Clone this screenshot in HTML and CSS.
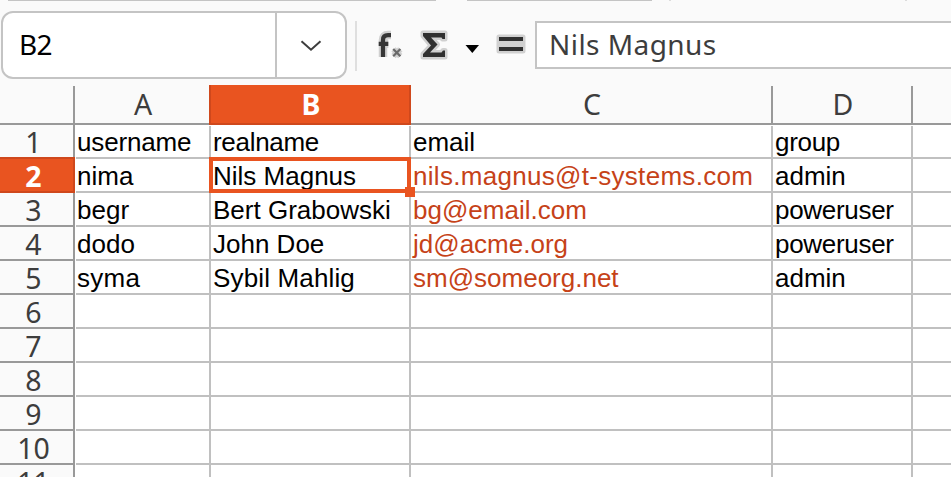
FILE: index.html
```html
<!DOCTYPE html>
<html lang="en">
<head>
<meta charset="utf-8">
<title>Spreadsheet</title>
<link rel="stylesheet" href="styles.css">
</head>
<body>
<div class="strip"><i class="edge edge-a"></i><i class="edge edge-b"></i><i class="tick tick-a"></i><i class="tick tick-b"></i></div>
<div class="bar">
  <div class="namebox"><span class="ref">B2</span><span class="drop"><svg width="22" height="12" viewBox="0 0 22 12"><path d="M1.5 1.2 L11 9.7 L20.5 1.2" fill="none" stroke="#3d3d3d" stroke-width="2"/></svg></span></div>
  <i class="sep"></i>
  <svg class="tools" width="158" height="40" viewBox="370 25 158 40">
    <g stroke-linejoin="round">
      <g fill="none" stroke="#d0d0d0" stroke-width="5">
        <path d="M391 35 H388 Q383 35 383 40 V57 M378.7 43.8 H388.3" stroke-width="8.5"/>
        <path d="M393.5 49.3 l6.8 6.8 m0 -6.8 l-6.8 6.8" stroke-width="6"/>
        <path fill="#d0d0d0" d="M423 33 H445 V39 H442.5 L441.5 37.5 H431 L437.5 44.5 L430 52.5 H441.5 L443 50.5 H445 V57 H423 V54 L431 45.5 L423 36 Z"/>
        <path fill="#d0d0d0" d="M499 37 H523 V51 H499 Z"/>
      </g>
      <path d="M391 35.2 H388 Q383 35.2 383 40 V57 M378.7 43.8 H388.3" fill="none" stroke="#363636" stroke-width="4.2"/>
      <path d="M393.2 49 l7.2 7.2 m0 -7.2 l-7.2 7.2" fill="none" stroke="#6a6a6a" stroke-width="2.2"/>
      <path d="M423 33 H445 V39 H442.5 L441.5 37.5 H431 L437.5 44.5 L430 52.5 H441.5 L443 50.5 H445 V57 H423 V54 L431 45.5 L423 36 Z" fill="#303030"/>
      <path d="M499 37 H523 V41 H499 Z M499 47 H523 V51 H499 Z" fill="#303030"/>
    </g>
    <path d="M465.5 45 H479 L472.3 53 Z" fill="#000"/>
  </svg>
  <div class="formula">Nils Magnus</div>
</div>
<div class="sheet">
  <div class="heads"><b></b><b>A</b><b class="on">B</b><b>C</b><b>D</b><b></b></div>
  <div class="row"><b>1</b><span class="snug">username</span><span class="tight">realname</span><span>email</span><span class="tight">group</span><span></span></div>
  <div class="row"><b class="on">2</b><span>nima</span><span class="cur">Nils Magnus</span><span class="link loose">nils.magnus@t-systems.com</span><span>admin</span><span></span></div>
  <div class="row"><b>3</b><span>begr</span><span>Bert Grabowski</span><span class="link">bg@email.com</span><span class="tight">poweruser</span><span></span></div>
  <div class="row"><b>4</b><span>dodo</span><span>John Doe</span><span class="link">jd@acme.org</span><span class="tight">poweruser</span><span></span></div>
  <div class="row"><b>5</b><span class="loose">syma</span><span class="airy">Sybil Mahlig</span><span class="link">sm@someorg.net</span><span>admin</span><span></span></div>
  <div class="row"><b>6</b><span></span><span></span><span></span><span></span><span></span></div>
  <div class="row"><b>7</b><span></span><span></span><span></span><span></span><span></span></div>
  <div class="row"><b>8</b><span></span><span></span><span></span><span></span><span></span></div>
  <div class="row"><b>9</b><span></span><span></span><span></span><span></span><span></span></div>
  <div class="row"><b>10</b><span></span><span></span><span></span><span></span><span></span></div>
  <div class="row"><b>11</b><span></span><span></span><span></span><span></span><span></span></div>
</div>
</body>
</html>
```
FILE: styles.css
```css
* { box-sizing: border-box; }
body {
  margin: 0;
  width: 951px;
  height: 477px;
  overflow: hidden;
  background: #fafafa;
  font-family: "Noto Sans", "Open Sans", sans-serif;
  color: #3d3d3d;
}
.strip { display: flex; height: 11px; }
.edge { height: 1px; background: #c4c4c4; }
.edge-a { width: 428px; margin-left: 8px; }
.edge-b { width: 185px; margin-left: 31px; }
.tick { width: 2px; height: 1px; background: #dcdcdc; }
.tick-a { margin-left: 17px; }
.tick-b { margin-left: 234px; }
.bar { display: flex; height: 75px; }
.namebox {
  display: flex;
  width: 346px;
  height: 68px;
  margin-left: 1px;
  border: 2px solid #c4c4c4;
  border-radius: 12px;
  background: #fff;
}
.ref {
  width: 274px;
  padding-left: 16px;
  border-right: 2px solid #c4c4c4;
  font-size: 28px;
  line-height: 62px;
  letter-spacing: -0.8px;
  color: #000;
}
.drop { display: flex; flex: 1; align-items: center; justify-content: center; padding-top: 1px; }
.sep { width: 2px; height: 50px; margin: 10px 13px 0 8px; background: #dfdfdf; }
.tools { display: block; margin-top: 14px; flex: none; }
.formula {
  flex: 1;
  height: 48px;
  margin: 10px 0 0 7px;
  padding-left: 12px;
  border: 2px solid #c4c4c4;
  border-right: 0;
  background: #fff;
  font-size: 28px;
  line-height: 43px;
  letter-spacing: 0.45px;
  white-space: nowrap;
}
.sheet { height: 391px; overflow: clip; overflow-clip-margin: 1px; }
.heads, .row { display: grid; grid-template-columns: 75px 136px 200px 362px 140px 38px; }
.heads { grid-template-rows: 39px; }
.row { grid-template-rows: 34px; background: #fff; }
b {
  position: relative;
  border-right: 2px solid #999;
  border-bottom: 2px solid #999;
  background: #fafafa;
  font-size: 28.5px;
  font-weight: 400;
  text-align: center;
}
.heads b { padding-left: 2px; line-height: 36px; box-shadow: 0 1px #fff; }
.heads b:first-child { box-shadow: 1px 1px #fff; }
.row b { padding: 2px 6px 0 0; line-height: 30px; font-size: 28.5px; box-shadow: 1px 0 #fff; }
.heads b:last-child, .row span:last-child { border-right: 0; }
b.on {
  border-color: #cf481c;
  background: #e95420;
  color: #fff;
  font-weight: 700;
}
.heads .on { margin-top: -1px; line-height: 38px; box-shadow: -2px 0 #cf481c, 0 1px #fff; }
.row .on { box-shadow: 0 -2px #cf481c, 1px 0 #fff; }
.row span {
  padding: 2px 0 0 2px;
  border-right: 2px solid #c0c0c0;
  border-bottom: 2px solid #c0c0c0;
  font-family: "Liberation Sans", Arial, sans-serif;
  font-size: 26px;
  line-height: 30px;
  color: #000;
  white-space: nowrap;
}
.row .link { color: #c64218; }
.row .tight { letter-spacing: -0.3px; }
.row .snug { letter-spacing: -0.15px; }
.row .airy { letter-spacing: 0.15px; }
.row .loose { letter-spacing: 0.3px; }
.cur { position: relative; }
.cur::before {
  content: "";
  position: absolute;
  inset: -2px -2px -2px -2px;
  border: 4px solid #e95420;
}
.cur::after {
  content: "";
  position: absolute;
  right: -6px;
  bottom: -6px;
  width: 10px;
  height: 10px;
  background: #e95420;
}
```
